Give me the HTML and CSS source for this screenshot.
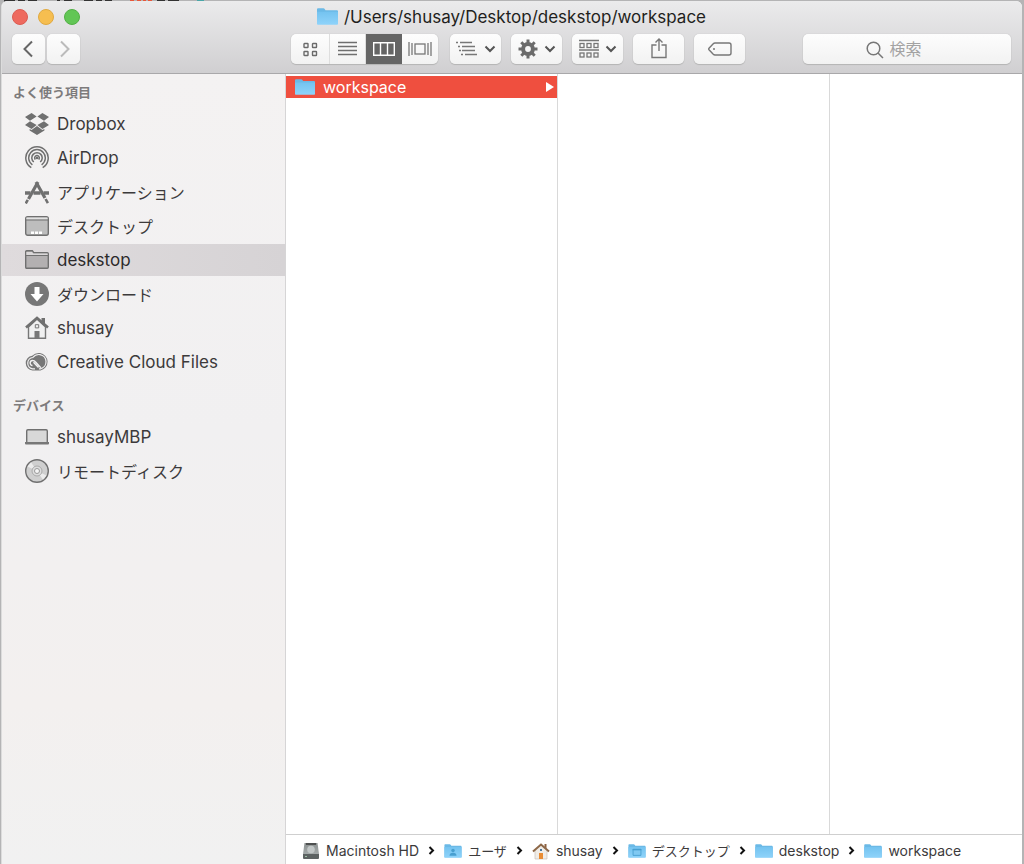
FILE: index.html
```
<!DOCTYPE html>
<html lang="ja">
<head>
    <meta charset="UTF-8">
    <meta name="viewport" content="width=device-width, initial-scale=1.0">
    <title>/Users/shusay/Desktop/deskstop/workspace</title>
    <link rel="stylesheet" href="styles.css">
</head>
<body>
    <!-- Shared icons -->
    <svg class="defs" width="0" height="0" aria-hidden="true">
        <defs>
            <linearGradient id="blue" x1="0" y1="0" x2="0" y2="1">
                <stop offset="0" stop-color="#74c3f0"/>
                <stop offset="1" stop-color="#8fd3fa"/>
            </linearGradient>
            <linearGradient id="metal" x1="0" y1="0" x2="0" y2="1">
                <stop offset="0" stop-color="#8b9090"/>
                <stop offset="1" stop-color="#a4aaaa"/>
            </linearGradient>
            <symbol id="folder" viewBox="0 0 20 16">
                <path d="M0 1.2Q0 .2 1 .2h5.2q.7 0 1.1.6l.8 1.2H19q1 0 1 1V15H0z" fill="#6bb9e6"/>
                <path d="M0 3.5h20V15q0 .8-.8.8H.8Q0 15.800 0 15z" fill="url(#blue)"/>
            </symbol>
            <symbol id="chevron-down" viewBox="0 0 12 8">
                <path d="M1.5 1.5L6 6l4.5-4.5" fill="none" stroke="#555" stroke-width="2"/>
            </symbol>
            <symbol id="separator" viewBox="0 0 7 9">
                <path d="M1.5 1l3.5 3.5L1.5 8" fill="none" stroke="#111" stroke-width="2"/>
            </symbol>
        </defs>
    </svg>

    <!-- Window behind -->
    <svg class="behind" width="210" height="2" aria-hidden="true">
        <path d="M4 1h11M18 1h7M28 1h9M57 1h3M64 1h8M84 1h9M96 1h6M105 1h7M157 1h8M168 1h11" stroke="#333" stroke-width="2"/>
        <path d="M130 1h4M137 1h4M143 1h3M148 1h4" stroke="#e8573a" stroke-width="2"/>
        <path d="M197 1h7" stroke="#4aa6a8" stroke-width="2"/>
    </svg>

    <div class="window">
        <header class="header">
            <div class="titlebar">
                <div class="lights">
                    <button class="light red" aria-label="閉じる"></button>
                    <button class="light yellow" aria-label="しまう"></button>
                    <button class="light green" aria-label="拡大"></button>
                </div>
                <h1 class="title">
                    <svg width="21" height="17"><use href="#folder"/></svg>
                    /Users/shusay/Desktop/deskstop/workspace
                </h1>
            </div>

            <div class="toolbar">
                <div class="nav">
                    <button class="tool" aria-label="戻る">
                        <svg width="12" height="18" viewBox="0 0 12 18"><path d="M9 1.5L1.500 9 9 16.500" fill="none" stroke="#666" stroke-width="2"/></svg>
                    </button>
                    <button class="tool" aria-label="進む" disabled>
                        <svg width="12" height="18" viewBox="0 0 12 18"><path d="M3 1.500L10.500 9 3 16.500" fill="none" stroke="#bbb" stroke-width="2"/></svg>
                    </button>
                </div>

                <div class="views">
                    <button class="view" aria-label="アイコン">
                        <svg width="15" height="15" viewBox="0 0 15 15" fill="none" stroke="#6b6b6b" stroke-width="1.4"><rect x="1" y="1.500" width="4" height="4" rx=".5"/><rect x="9.500" y="1.500" width="4" height="4" rx=".5"/><rect x="1" y="9.500" width="4" height="4" rx=".5"/><rect x="9.500" y="9.500" width="4" height="4" rx=".5"/></svg>
                    </button>
                    <button class="view" aria-label="リスト">
                        <svg width="20" height="16" viewBox="0 0 20 16"><path d="M0 1.500h19M0 5.500h19M0 9.500h19M0 13.500h19" stroke="#6f6f6f" stroke-width="1.3"/></svg>
                    </button>
                    <button class="view active" aria-label="カラム">
                        <svg width="22" height="14" viewBox="0 0 22 14" fill="none" stroke="#fff" stroke-width="1.4"><path d="M.7.7h20.600v12.600H.7z"/><path d="M7.500 1v12M14.500 1v12"/></svg>
                    </button>
                    <button class="view" aria-label="カバーフロー">
                        <svg width="24" height="14" viewBox="0 0 24 14" fill="none" stroke="#777" stroke-width="1.3"><rect x="7" y="2" width="10" height="10"/><path d="M1 0v14M23 0v14"/><path d="M4 1v12M20 1v12"/></svg>
                    </button>
                </div>

                <div class="actions">
                    <button class="tool wide" aria-label="並べ替え">
                        <svg width="22" height="16" viewBox="0 0 22 16"><path d="M4 1.500h12M6 5.500h13M6 9.500h13M9 13.500h12" stroke="#777" stroke-width="1.4"/><path d="M0 1.500h2M2 5.500h2M3 9.500h2M5 13.500h2" stroke="#777" stroke-width="1.4"/></svg>
                        <svg width="12" height="8"><use href="#chevron-down"/></svg>
                    </button>
                    <button class="tool wide" aria-label="操作">
                        <svg width="20" height="20" viewBox="-10 -10 20 20" stroke="#6b6b6b">
                            <circle r="4.900" fill="none" stroke-width="4"/>
                            <path d="M0-6v-3.500M0 6v3.500M6 0h3.500M-6 0h-3.500M4.300-4.300l2.400-2.400M-4.300-4.300l-2.400-2.400M4.300 4.300l2.400 2.400M-4.300 4.300l-2.400 2.400" stroke-width="3"/>
                        </svg>
                        <svg width="12" height="8"><use href="#chevron-down"/></svg>
                    </button>
                    <button class="tool wide" aria-label="グループ">
                        <svg width="20" height="20" viewBox="0 0 20 20" fill="none" stroke="#777" stroke-width="1.3"><path d="M0 1.500h20M0 11h20"/><rect x="1" y="4.500" width="4" height="4"/><rect x="8" y="4.500" width="4" height="4"/><rect x="15" y="4.500" width="4" height="4"/><rect x="1" y="14" width="4" height="4"/><rect x="8" y="14" width="4" height="4"/><rect x="15" y="14" width="4" height="4"/></svg>
                        <svg width="12" height="8"><use href="#chevron-down"/></svg>
                    </button>
                    <button class="tool wide" aria-label="共有">
                        <svg width="16" height="22" viewBox="0 0 16 22" fill="none" stroke="#777" stroke-width="1.4"><path d="M5.500 7H1v12.500h14V7h-4.500M8 13V1M4.500 4.500L8 1l3.500 3.500"/></svg>
                    </button>
                    <button class="tool wide" aria-label="タグ">
                        <svg width="24" height="14" viewBox="0 0 24 14" fill="none" stroke="#777" stroke-width="1.4"><path d="M7 1h14q2 0 2 2v8q0 2-2 2H7q-1 0-2-1L1 7.700q-.6-.7 0-1.400L5 2q1-1 2-1z"/><circle cx="6" cy="7" r="1" fill="#777" stroke="none"/></svg>
                    </button>
                </div>

                <div class="search">
                    <svg class="search-icon" width="18" height="18" viewBox="0 0 18 18" fill="none" stroke="#777" stroke-width="1.5"><circle cx="7.500" cy="7.500" r="6.300"/><path d="M12 12l5 5"/></svg>
                    <input type="search" placeholder="検索" aria-label="検索">
                </div>
            </div>
        </header>

        <div class="main">
            <nav class="sidebar">
                <h2>よく使う項目</h2>
                <ul>
                    <li><a href="#">
                        <svg width="24" height="24" viewBox="0 0 24 24" fill="#707070"><path d="M6.600 1L0 4.900 5 8.700l6.600-4.100zM17.400 1L24 4.900l-5 3.800-6.600-4.100zM0 12.900l6.600 4.100 5-3.900L5 9.200zM24 12.900L17.400 17l-5-3.900L19 9.200zM12 13.900l-5.400 4.200-2-1.200v1.700l7.400 4.300 7.400-4.300v-1.700l-2 1.200z"/></svg>
                        Dropbox
                    </a></li>
                    <li><a href="#">
                        <svg width="24" height="24" viewBox="0 0 24 24" fill="none" stroke="#707070" stroke-width="1.5"><path d="M6.300 21.600a11.200 11.200 0 1 1 11.400 0M7.400 18.800a8.300 8.300 0 1 1 9.200 0M8.800 16a5.200 5.200 0 1 1 6.400 0M10.400 13.500a2.300 2.300 0 1 1 3.200 0"/><circle cx="12" cy="12" r="1.300" fill="#707070" stroke="none"/></svg>
                        AirDrop
                    </a></li>
                    <li><a href="#" class="ja">
                        <svg width="24" height="24" viewBox="0 0 24 24" fill="none" stroke="#707070"><path d="M0 13h5.500M18.500 13H24" stroke-width="3.500"/><path d="M8.500 13h7" stroke-width="3.500"/><path d="M13 2L3.500 19M11 2l9 16" stroke-width="3.200"/><path d="M2.800 19.800L.7 23.500M20.600 19l2.300 4.200" stroke-width="2.600"/></svg>
                        アプリケーション
                    </a></li>
                    <li><a href="#" class="ja">
                        <svg width="24" height="24" viewBox="0 0 24 24"><rect x=".7" y="2.700" width="22.600" height="18.600" rx="2" fill="#bdbdbd" stroke="#707070" stroke-width="1.4"/><path d="M1.400 3.600h21.200v2H1.400z" fill="#e2e2e2"/><path d="M1 6h22" stroke="#707070"/><path d="M6 18.700h3M10 18.700h3M14 18.700h3" stroke="#fff" stroke-width="2.4"/></svg>
                        デスクトップ
                    </a></li>
                    <li><a href="#" class="selected">
                        <svg width="24" height="24" viewBox="0 0 24 24"><path d="M.7 19V3.700q0-1 1-1h5.600l1.500 2h13.500q1 0 1 1V19q0 1.300-1 1.300H1.700q-1 0-1-1.300z" fill="#b3b0b1" stroke="#707070" stroke-width="1.4"/><path d="M1.400 4h5.500l1.500 1.500h14.200V7H1.400z" fill="#dad7d8"/><path d="M1 7.500h22" stroke="#707070"/></svg>
                        deskstop
                    </a></li>
                    <li><a href="#" class="ja">
                        <svg width="24" height="24" viewBox="0 0 24 24"><circle cx="12" cy="12" r="12" fill="#777"/><path d="M9.500 5h5v7h4L12 19.500 5.500 12h4z" fill="#fff"/></svg>
                        ダウンロード
                    </a></li>
                    <li><a href="#">
                        <svg width="24" height="24" viewBox="0 0 24 24"><path d="M3.500 11v11.300h17V11L12 3z" fill="#f0f0f0" stroke="#777" stroke-width="1.4"/><path d="M16.500 2H20v7l-3.500-3z" fill="#707070"/><path d="M1 11.500L12 2l11 9.500" fill="none" stroke="#707070" stroke-width="2.6"/><path d="M9.500 15h5v7h-5z" fill="#777"/><path d="M10.300 8.700h3.400v3.200h-3.400z" fill="none" stroke="#777"/></svg>
                        shusay
                    </a></li>
                    <li><a href="#">
                        <svg width="24" height="24" viewBox="0 0 24 24" fill="none"><path d="M7.500 20.500a7.400 7.400 0 0 1-.4-14.700A9.300 9.300 0 0 1 15 3a8.900 8.900 0 0 1 .5 17.500z" fill="#777"/><path d="M10 18.800H7.500a5.700 5.700 0 0 1 .4-11.300A7.800 7.800 0 0 1 15 4.600a7.300 7.300 0 0 1 .4 14.300h-1.500" stroke="#f2f1f2" stroke-width="1.2"/><path d="M13.500 17.500l-5-5.200M7.500 15.500a2.500 2.500 0 0 1 .3-5c1.400 0 2.200.8 3 1.700l5 5.500" stroke="#f2f1f2" stroke-width="1.4"/></svg>
                        Creative Cloud Files
                    </a></li>
                </ul>

                <h2>デバイス</h2>
                <ul>
                    <li><a href="#">
                        <svg width="24" height="24" viewBox="0 0 24 24"><rect x="1.700" y="4.700" width="20.600" height="13" rx="1.200" fill="#d8d8d8" stroke="#707070" stroke-width="1.4"/><path d="M0 17h24v1.500q0 1-1 1H1q-1 0-1-1z" fill="#777"/></svg>
                        shusayMBP
                    </a></li>
                    <li><a href="#" class="ja">
                        <svg width="24" height="24" viewBox="0 0 24 24"><circle cx="12" cy="12" r="11.300" fill="#cfcfcf" stroke="#707070" stroke-width="1.4"/><path d="M12 12L2.500 7.500 6 3.200zM12 12l9.500 4.500-3.500 4.300z" fill="#ececec"/><circle cx="12" cy="12" r="5" fill="#ddd" stroke="#aaa"/><circle cx="12" cy="12" r="2.500" fill="#f5f5f5" stroke="#999"/></svg>
                        リモートディスク
                    </a></li>
                </ul>
            </nav>

            <div class="content">
                <div class="columns">
                    <div class="column">
                        <a href="#" class="file">
                            <svg width="20" height="16"><use href="#folder"/></svg>
                            <span>workspace</span>
                            <svg class="arrow" width="8" height="10" viewBox="0 0 8 10"><path d="M0 0l8 5-8 5z" fill="#fff"/></svg>
                        </a>
                    </div>
                    <div class="column"></div>
                    <div class="column"></div>
                </div>

                <footer class="path">
                    <a href="#">
                        <svg width="18" height="18" viewBox="0 0 18 18"><path d="M2.500 1h13L17 12H1z" fill="url(#metal)"/><path d="M1 12h16v4q0 1-1 1H2q-1 0-1-1z" fill="#5d6363"/><path d="M4 2h10" stroke="#333" stroke-width="1.4"/><circle cx="9" cy="7.500" r="3.800" fill="#c2c7c7"/><path d="M3 14.500h2" stroke="#9dbfa5"/></svg>
                        Macintosh HD
                    </a>
                    <svg width="7" height="9"><use href="#separator"/></svg>
                    <a href="#" class="ja">
                        <svg width="18" height="14" viewBox="0 0 20 16"><use href="#folder"/><circle cx="10" cy="7.500" r="2" fill="#489fd0"/><path d="M6 13.500q0-3.500 4-3.500t4 3.500z" fill="#489fd0"/></svg>
                        ユーザ
                    </a>
                    <svg width="7" height="9"><use href="#separator"/></svg>
                    <a href="#">
                        <svg width="18" height="18" viewBox="0 0 18 18"><path d="M3 8v9h12V8L9 3z" fill="#f0ece6" stroke="#c9c2b8" stroke-width=".7"/><path d="M12.500 2h2v5l-2-2z" fill="#8d6242"/><path d="M1 9.500L9 2.500l8 7" fill="none" stroke="#8d6848" stroke-width="2"/><path d="M7 11h4v6H7z" fill="#e98c33"/><path d="M8 7h2v2H8z" fill="#4a789e"/></svg>
                        shusay
                    </a>
                    <svg width="7" height="9"><use href="#separator"/></svg>
                    <a href="#" class="ja">
                        <svg width="18" height="14" viewBox="0 0 20 16"><use href="#folder"/><path d="M5.500 6h9v7h-9z" fill="#80c9f2" stroke="#489fd0"/><path d="M5 6.500h10" stroke="#489fd0" stroke-width="1.5"/></svg>
                        デスクトップ
                    </a>
                    <svg width="7" height="9"><use href="#separator"/></svg>
                    <a href="#">
                        <svg width="18" height="14"><use href="#folder"/></svg>
                        deskstop
                    </a>
                    <svg width="7" height="9"><use href="#separator"/></svg>
                    <a href="#">
                        <svg width="18" height="14"><use href="#folder"/></svg>
                        workspace
                    </a>
                </footer>
            </div>
        </div>
    </div>
</body>
</html>
```

FILE: styles.css
```
* {
    box-sizing: border-box;
}

body {
    margin: 0;
    min-height: 100vh;
    display: flex;
    padding: 1px 2px 0 1px;
    background: #b4b4b5;
    font-family: Inter, "Noto Sans CJK JP", sans-serif;
    font-size: 16px;
    color: #3c3a3b;
}

.defs,
.behind {
    position: absolute;
    top: 0;
    left: 0;
}

svg {
    flex: none;
    display: block;
}

button,
input {
    font: inherit;
    border: none;
    padding: 0;
    margin: 0;
}

a {
    color: inherit;
    text-decoration: none;
}

ul {
    list-style: none;
    margin: 0;
    padding: 0;
}

.window {
    position: relative;
    flex: 1;
    min-width: 0;
    display: flex;
    flex-direction: column;
    border-left: 1px solid #dcdcdc;
    border-radius: 6px 6px 0 0;
    overflow: hidden;
    background: #fff;
}

/* Header */
.header {
    background: linear-gradient(#ebebec, #d0cfd1);
    border-bottom: 1px solid #a9a8aa;
    padding: 0 11px 9px 10px;
}

.titlebar {
    display: grid;
    grid-template-columns: 1fr auto 1fr;
    align-items: center;
    height: 32px;
    padding-bottom: 1px;
}

.lights {
    display: flex;
    gap: 10px;
}

.light {
    width: 16px;
    height: 16px;
    border-radius: 50%;
    border: 1px solid;
}

.red {
    background: #ee6a5f;
    border-color: #dc5c52;
}

.yellow {
    background: #f6be50;
    border-color: #e0a940;
}

.green {
    background: #62c655;
    border-color: #52b045;
}

.title {
    display: flex;
    align-items: center;
    gap: 6px;
    margin: 0;
    font-size: 17px;
    font-weight: 400;
    color: #1f1f20;
    white-space: nowrap;
}

.toolbar {
    display: flex;
    align-items: center;
    padding-top: 1px;
}

.nav {
    display: flex;
    gap: 2px;
}

.tool,
.views,
.search input {
    height: 30px;
    border-radius: 5px;
    background: linear-gradient(#fdfdfd, #f2f2f2);
    box-shadow: 0 0 1px #aaa, 0 1px 1px #b5b5b5;
}

.tool {
    width: 33px;
    display: flex;
    align-items: center;
    justify-content: center;
    gap: 6px;
}

.wide {
    width: 51px;
}

.views {
    display: flex;
    overflow: hidden;
    margin-left: 211px;
}

.view {
    width: 36px;
    display: flex;
    align-items: center;
    justify-content: center;
    background: none;
    border-right: 1px solid #dedede;
}

.view:first-child {
    width: 39px;
}

.view:last-child {
    border-right: none;
}

.active {
    background: #656565;
    border-color: #656565;
}

.actions {
    display: flex;
    gap: 10px;
    margin-left: 12px;
}

.search {
    position: relative;
    width: 208px;
    margin-left: auto;
}

.search input {
    display: block;
    width: 100%;
    padding-left: 12px;
    text-align: center;
    outline: none;
}

.search input::placeholder {
    color: #a3a3a3;
    opacity: 1;
}

.search-icon {
    position: absolute;
    top: 7px;
    left: calc(50% - 41px);
}

/* Sidebar */
.main {
    flex: 1;
    display: flex;
}

.sidebar {
    flex: none;
    width: 284px;
    border-right: 1px solid #d6d5d6;
    background: linear-gradient(#f4f2f2, #f1f0f1 45%, #f3f0ef 80%, #f1f1f1);
}

.sidebar h2 {
    margin: 0;
    padding: 8px 11px 6px;
    font-size: 13px;
    line-height: 20px;
    font-weight: 700;
    color: #7d7b7c;
}

.sidebar ul {
    display: grid;
    gap: 2px;
    padding-bottom: 9px;
}

.sidebar a {
    display: flex;
    align-items: center;
    gap: 8px;
    height: 32px;
    padding-left: 23px;
    font-size: 17px;
}

.sidebar .ja {
    font-size: 16px;
}

.sidebar .selected {
    background: linear-gradient(90deg, #dfdbdd, #d6d3d5);
    color: #2c2a2b;
}

/* Columns */
.content {
    flex: 1;
    min-width: 0;
    display: flex;
    flex-direction: column;
}

.columns {
    flex: 1;
    display: flex;
}

.column {
    width: 272px;
    padding-top: 2px;
    border-right: 1px solid #d9d9d9;
}

.column:last-child {
    flex: 1;
    border-right: none;
}

.file {
    display: flex;
    align-items: center;
    gap: 8px;
    height: 22px;
    padding: 0 3px 0 9px;
    background: #ef4f3f;
    color: #fff;
}

.arrow {
    margin-left: auto;
}

/* Path bar */
.path {
    display: flex;
    align-items: center;
    gap: 9px;
    height: 30px;
    padding: 2px 16px 0;
    border-top: 1px solid #cfcfcf;
    font-size: 14px;
    white-space: nowrap;
}

.path a {
    display: flex;
    align-items: center;
    gap: 6px;
}

.path .ja {
    font-size: 13px;
}
```
